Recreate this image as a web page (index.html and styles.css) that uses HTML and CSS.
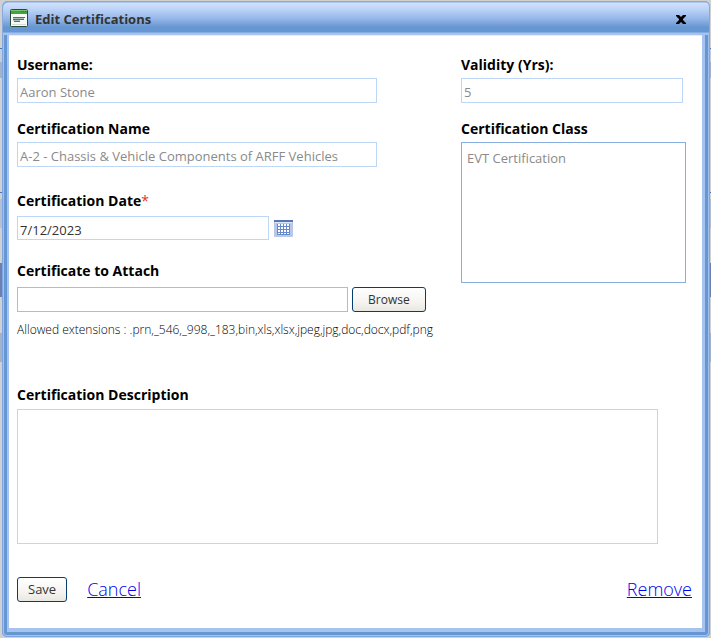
FILE: index.html
```html
<!DOCTYPE html>
<html lang="en">
<head>
<meta charset="utf-8">
<title>Edit Certifications</title>
<link rel="stylesheet" href="styles.css">
</head>
<body>
<main class="dialog" role="dialog" aria-labelledby="dialog-title">
  <header class="titlebar">
    <svg class="window-icon" width="18" height="18" viewBox="0 0 18 18" aria-hidden="true">
      <rect x=".5" y=".5" width="17" height="17" rx="1" fill="#f7faf6" stroke="#294a38"/>
      <path d="M1 1h16v4H1z" fill="#43a33c"/>
      <path d="M1 1h16v1H1z" fill="#78c569"/>
      <path d="M11 2h1v1h-1zM13 2h1v1h-1zM15 2h1v1h-1z" fill="#2c7a2c"/>
      <path d="M3 8h12v1H3zM3 10h11v1H3zM4 12h6v1H4z" fill="#477664"/>
      <path d="M3 9h11v1H3zM3 11h7v1H3z" fill="#a9c2b5"/>
      <path d="M2 15h14v1H2z" fill="#d5ded7"/>
    </svg>
    <h1 id="dialog-title">Edit Certifications</h1>
    <button class="close" type="button" aria-label="Close">
      <svg width="10" height="9" viewBox="0 0 10 9" aria-hidden="true"><path d="M0 0h3l2 2 2-2h3v1L7 4v1l3 3v1H7L5 7 3 9H0V8l3-3V4L0 1z" fill="#000"/></svg>
    </button>
  </header>
  <form class="content">
    <div class="columns">
      <div class="column">
        <div class="field">
          <label for="username">Username:</label>
          <input class="box" id="username" value="Aaron Stone" disabled>
        </div>
        <div class="field">
          <label for="name">Certification Name</label>
          <input class="box" id="name" value="A-2 - Chassis &amp; Vehicle Components of ARFF Vehicles" disabled>
        </div>
        <div class="field date-field">
          <label for="date">Certification Date<span class="required">*</span></label>
          <div class="control-row">
            <input class="box date" id="date" value="7/12/2023">
            <button class="calendar" type="button" aria-label="Open calendar">
              <svg width="19" height="17" viewBox="0 0 19 17" aria-hidden="true">
                <rect width="19" height="17" rx="1" fill="#b7c8e9"/>
                <path d="M0 0h19v2H0z" fill="#5778b4"/>
                <path d="M1 2h17v1H1z" fill="#dce5f5"/>
                <path d="M3 4h13v11H3z" fill="#6788ca"/>
                <path d="M4 4h2v2H4zM7 4h2v2H7zM10 4h2v2h-2zM13 4h2v2h-2zM4 7h2v2H4zM7 7h2v2H7zM10 7h2v2h-2zM13 7h2v2h-2zM4 10h2v2H4zM7 10h2v2H7zM10 10h2v2h-2zM13 10h2v2h-2zM4 13h2v1H4zM7 13h2v1H7zM10 13h2v1h-2zM13 13h2v1h-2z" fill="#fff"/>
              </svg>
            </button>
          </div>
        </div>
        <div class="field attach-field">
          <label for="file">Certificate to Attach</label>
          <div class="control-row">
            <input class="box file" id="file">
            <button class="button browse" type="button">Browse</button>
          </div>
          <p class="hint">Allowed extensions : .prn,_546,_998,_183,bin,xls,xlsx,jpeg,jpg,doc,docx,pdf,png</p>
        </div>
      </div>
      <div class="column">
        <div class="field">
          <label for="validity">Validity (Yrs):</label>
          <input class="box validity" id="validity" value="5" disabled>
        </div>
        <div class="field">
          <label for="class">Certification Class</label>
          <select class="class-list" id="class" size="6" disabled><option>EVT Certification</option></select>
        </div>
      </div>
    </div>
    <div class="field description-field">
      <label for="description">Certification Description</label>
      <textarea class="description" id="description"></textarea>
    </div>
    <footer class="actions">
      <button class="button" type="button">Save</button>
      <a href="#">Cancel</a>
      <a class="remove" href="#">Remove</a>
    </footer>
  </form>
</main>
</body>
</html>
```
FILE: styles.css
```css
* { box-sizing: border-box; }
body {
  margin: 0;
  padding: 1px 1px 1px 2px;
  min-height: 100vh;
  display: flex;
  background: linear-gradient(#d0d0d0 0 48px, #4c70b4 48px 49px, #c4ccda 49px 62px, #a4b1cb 62px 78px, #d0d0d0 78px 192px, #4c70b4 192px 193px, #d0d0d0 193px 199px, #b4bfd3 199px 228px, #d0d0d0 228px 263px, #6b7fb0 263px 297px, #d0d0d0 297px 333px, #a4b1cb 333px 362px, #d0d0d0 362px);
  font-family: "Segoe UI", "Open Sans", sans-serif;
  color: #333;
}
input, textarea, select, button { font: inherit; }
.dialog {
  flex: 1;
  display: flex;
  flex-direction: column;
  padding: 0 8px 9px 7px;
  border-radius: 6px 6px 5px 5px;
  background: #a5c3ee;
  box-shadow: inset 0 0 0 1px #7fa6df, inset 0 0 0 2px #a0c0ee, inset 0 0 0 5px #6797d3;
}
.titlebar {
  height: 34px;
  margin: 0 -8px 0 -7px;
  padding: 0 19px 0 8px;
  display: flex;
  align-items: center;
  gap: 7px;
  border-radius: 6px 6px 0 0;
  background: linear-gradient(#8cacde 0 1px, #cfe1fb 2px, #bdd4f7 8px, #94b5e7 18px, #6797d2 26px, #6797d2 31px, #a5c3ee 32px);
  box-shadow: inset 1px 1px #86aadf, inset -1px 0 #86aadf;
}
.titlebar h1 { flex: 1; margin: 0; padding-top: 2px; font-size: 13px; line-height: 18px; font-weight: 700; }
.close, .calendar { padding: 0; border: 0; background: none; display: flex; }
.close { padding: 7px 5px 5px; }
.content { flex: 1; padding: 19px 10px 24px 8px; background: #fff; border-top: 1px solid #e3edfb; }
.columns { display: grid; grid-template-columns: 444fr 231fr; }
.column, .field { display: flex; flex-direction: column; }
.column { gap: 16px; }
.field { gap: 3px; align-items: flex-start; }
label { font-size: 14px; line-height: 20px; font-weight: 700; color: #000; }
.required { color: #e63221; font-weight: 400; }
.box {
  width: 360px;
  max-width: 100%;
  height: 25px;
  padding: 3px 2px 0;
  border: 1px solid #bfd7f7;
  background: #fff;
  color: #333;
  font-size: 13px;
  line-height: 20px;
}
.box:disabled { color: #8a8a8a; }
.box.validity { width: 222px; }
.date-field { gap: 5px; margin-top: 8px; }
.attach-field { gap: 6px; margin-top: 5px; }
.control-row { display: flex; align-items: center; gap: 5px; }
.box.date { width: 252px; height: 24px; }
.box.file { width: 331px; border-color: #abbdda; }
.attach-field .control-row { gap: 4px; }
.button {
  height: 25px;
  padding: 0 10px;
  border: 1px solid #073e70;
  border-radius: 3px;
  background: linear-gradient(#fff, #f5f4f1 60%, #e9e7e1);
  color: #333;
  font-size: 12px;
  line-height: 20px;
}
.browse { padding: 0 15px; }
.hint { margin: 3px 0 0; font-size: 12px; line-height: 18px; font-weight: 300; color: #000; }
.class-list {
  width: 225px;
  max-width: 100%;
  height: 141px;
  padding: 6px 4px;
  border: 1px solid #88addf;
  border-radius: 0;
  background: #fff;
  font-size: 13px;
  line-height: 20px;
  opacity: 1;
}
.class-list option { color: #8a8a8a; padding: 0 1px; min-height: 20px; }
.description-field { gap: 4px; margin-top: 46px; }
.description { width: 95%; height: 135px; border: 1px solid #c0d7f3; background: #fff; resize: none; }
.actions { display: flex; align-items: center; gap: 20px; margin-top: 32px; font-size: 18px; line-height: 26px; }
.actions .button { font-size: 13px; }
.actions a { color: #00e; font-weight: 300; }
.actions .remove { margin-left: auto; }
```
